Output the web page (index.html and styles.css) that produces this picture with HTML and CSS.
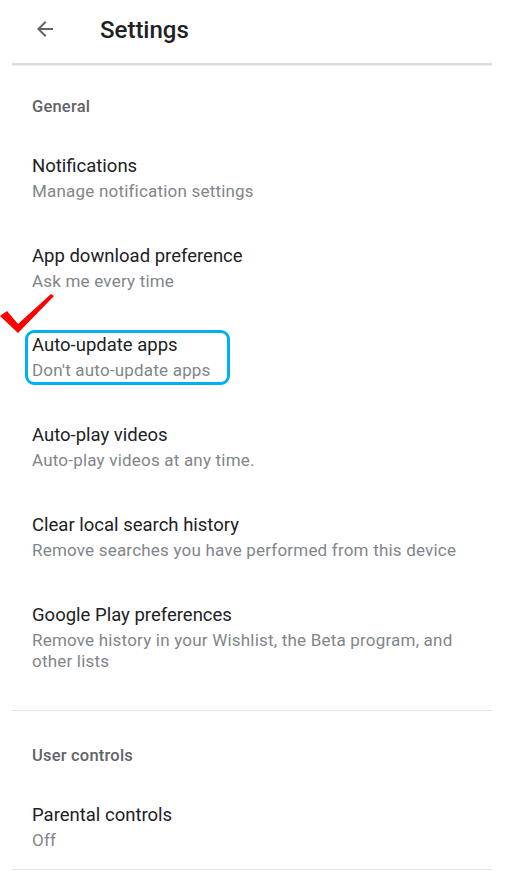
FILE: index.html
```html
<!DOCTYPE html>
<html>

<head>
    <title>Settings</title>
    <link rel="stylesheet" href="styles.css">
</head>

<body>
    <header class="app-bar">
        <svg class="back-icon" width="24" height="24" viewBox="0 0 24 24">
            <path d="M20 11H7.83l5.59-5.59L12 4l-8 8 8 8 1.41-1.41L7.83 13H20v-2z" fill="#5f6368"/>
        </svg>
        <h1 class="title">Settings</h1>
    </header>
    <div class="divider"></div>

    <section class="group">
        <h2 class="group-title">General</h2>

        <div class="item">
            <div class="item-title">Notifications</div>
            <div class="item-sub">Manage notification settings</div>
        </div>

        <div class="item">
            <div class="item-title">App download preference</div>
            <div class="item-sub">Ask me every time</div>
        </div>

        <div class="item marked">
            <svg class="check" width="56" height="40" viewBox="0 0 56 40">
                <polygon points="0,22 7,17 18,30 51,0 54,2 18,39" fill="#f00"/>
            </svg>
            <div class="highlight">
                <div class="item-title">Auto-update apps</div>
                <div class="item-sub">Don't auto-update apps</div>
            </div>
        </div>

        <div class="item">
            <div class="item-title">Auto-play videos</div>
            <div class="item-sub">Auto-play videos at any time.</div>
        </div>

        <div class="item">
            <div class="item-title">Clear local search history</div>
            <div class="item-sub">Remove searches you have performed from this device</div>
        </div>

        <div class="item last">
            <div class="item-title">Google Play preferences</div>
            <div class="item-sub">Remove history in your Wishlist, the Beta program, and other lists</div>
        </div>
    </section>
    <div class="divider thin"></div>

    <section class="group second">
        <h2 class="group-title">User controls</h2>

        <div class="item">
            <div class="item-title">Parental controls</div>
            <div class="item-sub">Off</div>
        </div>
    </section>
    <div class="divider thin"></div>
</body>

</html>
```

FILE: styles.css
```css
body {
    margin: 0;
    padding: 0;
    background: #fff;
    font-family: Roboto, "Noto Sans", Arial, sans-serif;
    color: #202124;
}

.app-bar {
    display: flex;
    align-items: center;
    height: 63px;
    padding-left: 33px;
}

.back-icon {
    margin-top: -6px;
}

.title {
    margin: -4px 0 0 43px;
    font-size: 24px;
    font-weight: 500;
    color: #202124;
}

.divider {
    margin: 0 33px 0 12px;
    height: 2px;
    background: #dcdcdc;
    box-shadow: 0 1px 1px rgba(0, 0, 0, 0.08);
}

.divider.thin {
    height: 1px;
    background: #e4e4e4;
    box-shadow: none;
}

.group {
    padding: 0 33px 0 32px;
}

.group-title {
    margin: 0;
    padding: 32px 0 16px;
    font-size: 16.5px;
    line-height: 20px;
    letter-spacing: 0.2px;
    font-weight: 500;
    color: #5f6368;
}

.second .group-title {
    padding-top: 35px;
}

.item {
    padding: 21px 0 21px;
}

.item-title {
    font-size: 18.5px;
    line-height: 24px;
    color: #202124;
}

.item-sub {
    font-size: 17px;
    line-height: 21px;
    letter-spacing: 0.2px;
    color: #80868b;
    margin-top: 3px;
}

.item.last {
    padding-bottom: 38px;
}

.second .item {
    padding-bottom: 18px;
}

/* highlighted row with hand-drawn check */
.marked {
    position: relative;
}

.check {
    position: absolute;
    left: -32px;
    top: -19px;
}

.highlight {
    display: inline-block;
    margin: -4px 0 -4px -7px;
    padding: 0 16px 1px 4px;
    border: 3px solid #00b0f0;
    border-radius: 9px;
}
```
